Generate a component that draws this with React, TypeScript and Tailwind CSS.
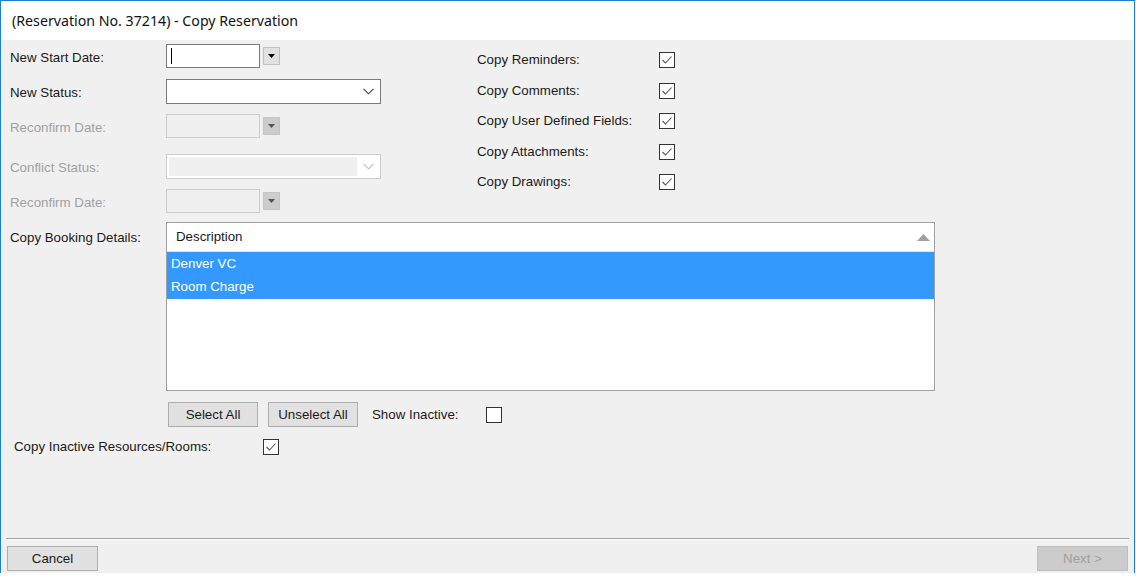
import React from "react";

const F = { fontFamily: '"Liberation Sans", Arial, sans-serif' };

function Check({ checked = true }: { checked?: boolean }) {
  return (
    <div className="w-[16px] h-[16px] border border-[#333333] bg-white flex items-center justify-center shrink-0">
      {checked && (
        <svg width="14" height="14" viewBox="0 0 14 14">
          <path d="M2.5 7 L5.5 10 L11.5 3.5" fill="none" stroke="#555555" strokeWidth="1.1" />
        </svg>
      )}
    </div>
  );
}

function DropBtn({ disabled = false }: { disabled?: boolean }) {
  return (
    <div
      className={
        "w-[17px] h-[18px] flex items-center justify-center ml-[3px] border " +
        (disabled ? "bg-[#cccccc] border-[#c4c4c4]" : "bg-[#e1e1e1] border-[#c0c0c0]")
      }
    >
      <svg width="7" height="4" viewBox="0 0 7 4">
        <path d="M0 0 L7 0 L3.5 4 Z" fill={disabled ? "#555555" : "#000000"} />
      </svg>
    </div>
  );
}

function Chevron({ color }: { color: string }) {
  return (
    <svg width="11" height="7" viewBox="0 0 11 7">
      <path d="M0.5 0.8 L5.5 5.8 L10.5 0.8" fill="none" stroke={color} strokeWidth="1.1" />
    </svg>
  );
}

function Label({ children, disabled = false }: { children: React.ReactNode; disabled?: boolean }) {
  return (
    <div className={"w-[156px] shrink-0 text-[13.3px] pt-[3px] " + (disabled ? "text-[#a0a0a0]" : "text-[#1a1a1a]")}>
      {children}
    </div>
  );
}

export default function App() {
  return (
    <div className="w-[1136px] h-[577px] bg-white overflow-hidden" style={F}>
      <div className="w-[1135px] h-[573px] border-l border-t border-r border-[#1a7fd6] flex flex-col">
        <div className="h-[39px] bg-white flex items-center pl-[11px] shrink-0">
          <span className="text-[14.2px] text-[#111111]" style={{ fontFamily: '"Noto Sans", "Open Sans", sans-serif' }}>
            (Reservation No. 37214) - Copy Reservation
          </span>
        </div>
        <div className="flex-1 bg-[#f0f0f0] flex flex-col">
          {/* top area */}
          <div className="flex pl-[9px]">
            <div className="flex flex-col pt-[4px] w-[371px]">
              <div className="flex items-center h-[24px]">
                <Label>New Start Date:</Label>
                <div className="w-[94px] h-[24px] bg-white border border-[#7a7a7a] flex items-center pl-[4px]">
                  <div className="w-px h-[16px] bg-black" />
                </div>
                <DropBtn />
              </div>
              <div className="flex items-center h-[25px] mt-[11px]">
                <Label>New Status:</Label>
                <div className="w-[215px] h-[25px] bg-white border border-[#7a7a7a] flex items-center justify-end pr-[6px]">
                  <Chevron color="#444444" />
                </div>
              </div>
              <div className="flex items-center h-[24px] mt-[10px]">
                <Label disabled>Reconfirm Date:</Label>
                <div className="w-[94px] h-[24px] bg-[#f0f0f0] border border-[#cccccc]" />
                <DropBtn disabled />
              </div>
              <div className="flex items-center h-[25px] mt-[16px]">
                <Label disabled>Conflict Status:</Label>
                <div className="w-[215px] h-[25px] bg-white border border-[#cccccc] flex items-center pl-[2px] pr-[6px]">
                  <div className="w-[188px] h-[19px] bg-[#f0f0f0]" />
                  <div className="flex-1" />
                  <Chevron color="#bfbfbf" />
                </div>
              </div>
              <div className="flex items-center h-[24px] mt-[10px]">
                <Label disabled>Reconfirm Date:</Label>
                <div className="w-[94px] h-[24px] bg-[#f0f0f0] border border-[#cccccc]" />
                <DropBtn disabled />
              </div>
            </div>
            <div className="flex flex-col pt-[5px] ml-[96px]">
              {[
                "Copy Reminders:",
                "Copy Comments:",
                "Copy User Defined Fields:",
                "Copy Attachments:",
                "Copy Drawings:",
              ].map((t) => (
                <div key={t} className="flex items-center h-[30.5px]">
                  <div className="w-[182px] text-[13.3px] text-[#1a1a1a]">{t}</div>
                  <Check />
                </div>
              ))}
            </div>
          </div>

          {/* list */}
          <div className="flex pl-[9px] mt-[9px]">
            <div className="w-[156px] shrink-0 text-[13.3px] text-[#1a1a1a] pt-[6px]">Copy Booking Details:</div>
            <div className="w-[769px] h-[169px] bg-white border border-[#a0a0a0] flex flex-col">
              <div className="h-[29px] flex items-center justify-between pl-[9px] pr-[4px] border-b border-[#e5e5e5]">
                <span className="text-[13.3px] text-[#1a1a1a]">Description</span>
                <svg width="13" height="8" viewBox="0 0 13 8">
                  <path d="M0 8 L6.5 1 L13 8 Z" fill="#a0a0a0" />
                </svg>
              </div>
              <div className="h-[23.5px] bg-[#3399ff] text-white text-[13.3px] flex items-center pl-[4px]">Denver VC</div>
              <div className="h-[23.5px] bg-[#3399ff] text-white text-[13.3px] flex items-center pl-[4px]">Room Charge</div>
            </div>
          </div>

          {/* buttons row */}
          <div className="flex items-center mt-[11px] pl-[167px]">
            <div className="w-[90px] h-[25px] bg-[#e1e1e1] border border-[#adadad] flex items-center justify-center text-[13.3px] text-[#1a1a1a]">
              Select All
            </div>
            <div className="w-[90px] h-[25px] ml-[10px] bg-[#e1e1e1] border border-[#adadad] flex items-center justify-center text-[13.3px] text-[#1a1a1a]">
              Unselect All
            </div>
            <div className="ml-[14px] w-[114px] text-[13.3px] text-[#1a1a1a]">Show Inactive:</div>
            <Check checked={false} />
          </div>

          {/* inactive row */}
          <div className="flex items-center mt-[11px] pl-[13px] h-[17px]">
            <div className="w-[249px] text-[13.3px] text-[#1a1a1a]">Copy Inactive Resources/Rooms:</div>
            <Check />
          </div>

          <div className="flex-1" />

          {/* footer */}
          <div className="mx-[5px] border-t border-[#a0a0a0] border-b border-b-white" />
          <div className="flex justify-between px-[6px] pt-[6px] pb-[2px]">
            <div className="w-[91px] h-[25px] bg-[#e1e1e1] border border-[#adadad] flex items-center justify-center text-[13.3px] text-[#1a1a1a]">
              Cancel
            </div>
            <div className="w-[91px] h-[25px] bg-[#cccccc] border border-[#bfbfbf] flex items-center justify-center text-[13.3px] text-[#a0a0a0]">
              Next &gt;
            </div>
          </div>
        </div>
      </div>
    </div>
  );
}
